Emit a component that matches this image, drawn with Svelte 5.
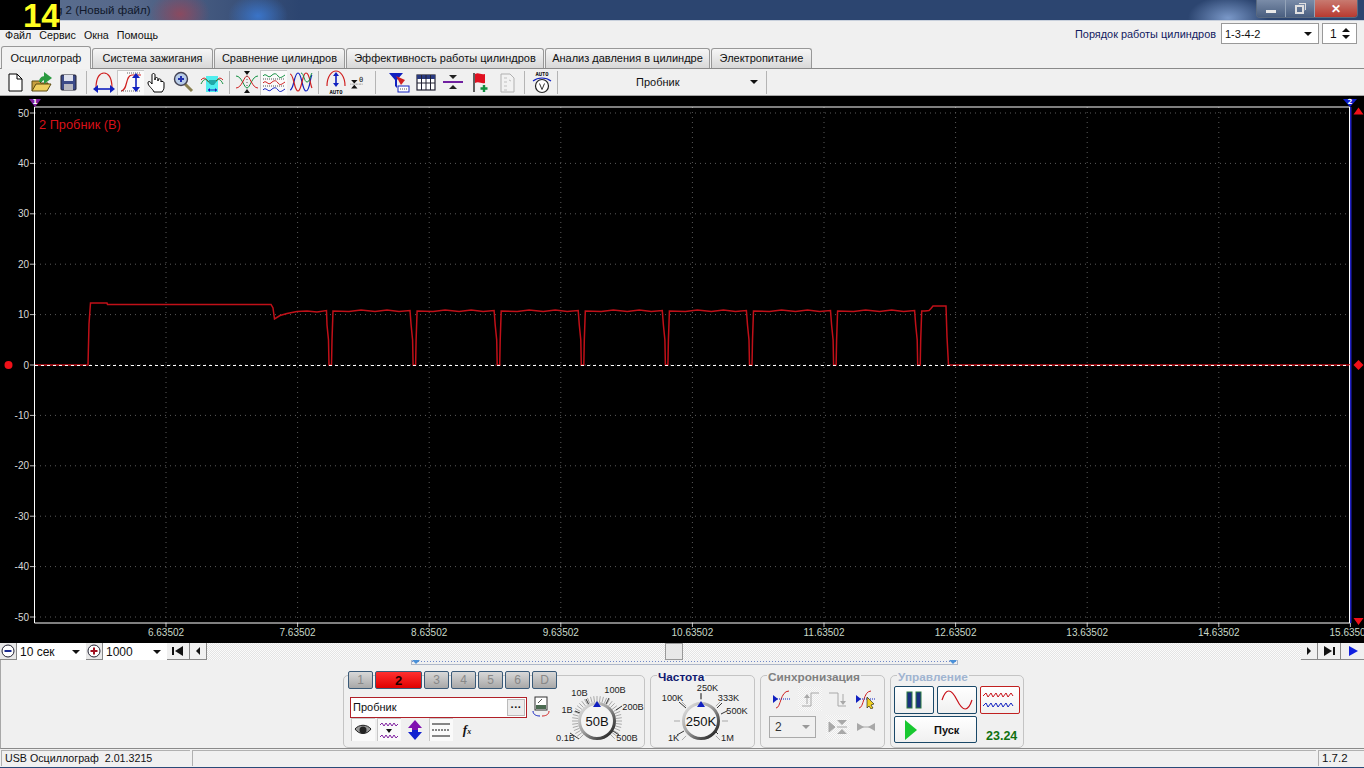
<script>
  const tabs = ['Осциллограф', 'Система зажигания', 'Сравнение цилиндров', 'Эффективность работы цилиндров', 'Анализ давления в цилиндре', 'Электропитание'];
  const menu = ['Файл', 'Сервис', 'Окна', 'Помощь'];
  const channels = ['3', '4', '5', '6', 'D'];

  const volts = [50, 40, 30, 20, 10, 0, -10, -20, -30, -40, -50];
  const times = [6, 7, 8, 9, 10, 11, 12, 13, 14, 15];
  const yOf = (v) => 365 - v * 5.04;
  const xOf = (t) => 166 + (t - 6) * 131.6;

  // trace, read off the picture: start, ramp and then the repeating dips
  function buildTrace() {
    let pts = [[35, 365], [88, 365], [89, 324], [90.5, 303], [107, 303], [107.5, 304.5], [271, 304.5], [273, 308], [274.5, 319], [280, 315.5], [287, 313.5], [297, 311.5], [307, 311], [317, 312], [326.5, 310.5]];
    for (let i = 0; i < 8; i++) {
      const d = 327 + i * 84.1;
      pts.push([d, 325], [d + 1.5, 340], [d + 2, 365], [d + 4.5, 365], [d + 5, 340], [d + 6, 311]);
      if (i < 7) {
        pts.push([d + 22, 311.5], [d + 34, 310], [d + 48, 311.5], [d + 60, 310], [d + 72, 311.5], [d + 83, 310.5]);
      }
    }
    pts.push([925, 311], [929, 310.5], [931, 308.5], [933, 306], [946, 306], [947, 337], [948.5, 365], [1350, 365]);
    return pts.map((p) => p.join(',')).join(' ');
  }
  const trace = buildTrace();

  function ticks(cx, cy, r1, r2, n) {
    let out = [];
    for (let i = 0; i <= n; i++) {
      const a = ((135 + (270 * i) / n) * Math.PI) / 180;
      out.push([cx + r1 * Math.cos(a), cy + r1 * Math.sin(a), cx + r2 * Math.cos(a), cy + r2 * Math.sin(a)]);
    }
    return out;
  }
  const voltTicks = ticks(41, 41, 19, 25, 36);
  const freqTicks = ticks(41, 41, 21, 27, 6);
</script>

{#snippet dial(value, labels, spokes, marks, gid)}
  <svg class="dial" width="90" height="68" viewBox="0 0 90 68">
    <defs>
      <linearGradient id={gid} x1="0" y1="0" x2="1" y2="1">
        <stop offset="0" stop-color="#e8e8e8" />
        <stop offset="0.45" stop-color="#a0a0a0" />
        <stop offset="1" stop-color="#101010" />
      </linearGradient>
    </defs>
    {#each marks as t}
      <line x1={t[0]} y1={t[1]} x2={t[2]} y2={t[3]} stroke="#a8a8a8" />
    {/each}
    {#each spokes as s}
      <line x1={s[0]} y1={s[1]} x2={s[2]} y2={s[3]} stroke="#333" />
    {/each}
    <circle cx="41" cy="41" r="17.5" fill="#f4f4f4" stroke="url(#{gid})" stroke-width="3" />
    <path d="M41 21l4 6h-8z" fill="#1020c0" />
    <text x="41" y="46" text-anchor="middle" class="dial-value">{value}</text>
    {#each labels as l}
      <text x={l[0]} y={l[1]} text-anchor="middle" class="dial-label">{l[2]}</text>
    {/each}
  </svg>
{/snippet}

<div class="app">
  <div class="titlebar">
    <div class="clock"><span>14</span></div>
    <span class="title">g 2 (Новый файл)</span>
    <div class="winbtns">
      <div class="winbtn"><span class="min"></span></div>
      <div class="winbtn"><span class="restore"></span></div>
      <div class="winbtn close">✕</div>
    </div>
  </div>

  <div class="menubar">
    <div class="menu">
      {#each menu as m}<span>{m}</span>{/each}
    </div>
    <div class="order">
      <span class="order-label">Порядок работы цилиндров</span>
      <div class="combo order-combo"><span>1-3-4-2</span><i class="arrow"></i></div>
      <div class="combo spin"><span>1</span><b class="spinarrows"><i class="up"></i><i class="arrow"></i></b></div>
    </div>
  </div>

  <div class="tabs">
    {#each tabs as t, i}
      <div class="tab" class:active={i === 0}>{t}</div>
    {/each}
  </div>

  <div class="toolbar">
    <div class="tb"><svg width="24" height="24" viewBox="0 0 24 24"><path d="M6 4h8l5 5v12H6z" fill="#fff" stroke="#000" /><path d="M14 4v5h5" fill="none" stroke="#000" /></svg></div>
    <div class="tb"><svg width="24" height="24" viewBox="0 0 24 24"><path d="M2 21V11h7l2 2h7v3" fill="#c8a040" stroke="#5a4a10" /><path d="M2 21l4-7h15l-4 7z" fill="#f0d060" stroke="#5a4a10" /><path d="M14 2l8 6-8 6z" fill="#2a9a40" /><path d="M9 12c0-3 2-6 6-6v4c-2 0-3 1-3 2z" fill="#2a9a40" /></svg></div>
    <div class="tb"><svg width="24" height="24" viewBox="0 0 24 24"><rect x="4" y="5" width="15" height="15" rx="1" fill="#3c4a88" stroke="#223" /><rect x="7" y="5" width="9" height="6" fill="#dfe2ee" /><rect x="7" y="14" width="9" height="6" fill="#b8b8c0" /></svg></div>
    <div class="sep"></div>
    <div class="tb"><svg width="24" height="24" viewBox="0 0 24 24"><path d="M4 18C4 7 8 3 12 3s8 4 8 15" fill="none" stroke="#d02020" stroke-width="1.2" /><path d="M4 19h16" stroke="#1020c0" stroke-width="1.6" /><path d="M1 19l5-4v8zM23 19l-5-4v8z" fill="#1020c0" /></svg></div>
    <div class="tb sel"><svg width="24" height="24" viewBox="0 0 24 24"><path d="M2 21c7 0 4-16 11-16h9" fill="none" stroke="#d02020" stroke-width="1.2" /><path d="M8 3h14M2 21h20" stroke="#666" stroke-dasharray="1 1" /><path d="M17 7v11" stroke="#1020c0" stroke-width="1.6" /><path d="M17 3l4 5h-8zM17 22l4-5h-8z" fill="#1020c0" /></svg></div>
    <div class="tb"><svg width="24" height="24" viewBox="0 0 24 24"><path d="M8 22c-1-3-6-6-6-9s3-1 4 1V5c0-2 3-2 3 0v5-1c0-2 3-2 3 0v2-1c0-2 3-1 3 0v2c0-1 3-1 3 1v4c0 3-1 3-2 5z" fill="#fff" stroke="#000" /></svg></div>
    <div class="tb zoomtb"><svg width="24" height="24" viewBox="0 0 24 24"><path d="M14 14l7 7" stroke="#8a8050" stroke-width="3" /><circle cx="10" cy="9" r="6.5" fill="#b8cce8" stroke="#445" stroke-width="1.4" /><path d="M7 9h6M10 6v6" stroke="#2030b0" stroke-width="2" /></svg></div>
    <div class="tb"><svg width="24" height="24" viewBox="0 0 24 24"><rect x="6" y="6" width="12" height="16" fill="#50eeee" /><path d="M1 10c5-6 7 4 11 4s6-10 11-4" fill="none" stroke="#d02020" /><path d="M1 14c5-10 7 0 11 0s6-10 11 0" fill="none" stroke="#109040" /><path d="M8 20h9" stroke="#1020c0" /><path d="M8 20l2-2v4zM17 20l-2-2v4z" fill="#1020c0" /><path d="M9 10h7v2l-2 3h-3l-2-3z" fill="#20a8a8" /></svg></div>
    <div class="sep"></div>
    <div class="tb"><svg width="24" height="24" viewBox="0 0 24 24"><path d="M1 6c6 0 8 12 11 12s5-12 11-12" fill="none" stroke="#109040" /><path d="M1 18c6 0 8-12 11-12s5 12 11 12" fill="none" stroke="#d02020" /><path d="M12 5l-3-4h6zM12 19l-3 4h6z" fill="#111" /><path d="M12 6v12" stroke="#555" stroke-dasharray="1 2" /></svg></div>
    <div class="tb sel"><svg width="24" height="24" viewBox="0 0 24 24"><path d="M1 6c3-4 5 3 8 0s5-3 7 0 4 1 7-1" fill="none" stroke="#109040" /><path d="M1 13c3-4 5 3 8 0s5-3 7 0 4 1 7-1" fill="none" stroke="#d02020" /><path d="M1 20c3-4 5 3 8 0s5-3 7 0 4 1 7-1" fill="none" stroke="#1020c0" /><path d="M1 9h22M1 16h22" stroke="#555" stroke-dasharray="1 1" /></svg></div>
    <div class="tb"><svg width="24" height="24" viewBox="0 0 24 24"><path d="M1 20C5 20 5 3 9 3s4 18 8 18 4-14 6-16" fill="none" stroke="#1020c0" stroke-width="1.2" /><path d="M1 4c4 0 4 17 8 17s4-18 8-18 4 12 6 15" fill="none" stroke="#d02020" stroke-width="1.2" /><path d="M12 3c3 0 3 9 6 9s3-6 5-9" fill="none" stroke="#109040" /></svg></div>
    <div class="sep"></div>
    <div class="tb"><svg width="24" height="24" viewBox="0 0 24 24"><path d="M3 16C3 6 8 1 12 1s9 5 9 15" fill="none" stroke="#d02020" stroke-width="1.2" /><path d="M12 5v10" stroke="#1020c0" stroke-width="1.6" /><path d="M12 2l3 4H9zM12 17l3-4H9z" fill="#1020c0" /><text x="12" y="23.5" text-anchor="middle" class="tiny">AUTO</text></svg></div>
    <div class="tb w17"><svg width="24" height="24" viewBox="0 0 24 24"><path d="M3 9h9l-4.500 5zM3 21h9l-4.500-5z" fill="#111" /><path d="M2 15h18" stroke="#444" stroke-dasharray="1 1" /><text x="17" y="12" text-anchor="middle" class="tiny zero">0</text></svg></div>
    <div class="sep wide"></div>
    <div class="tb"><svg width="24" height="24" viewBox="0 0 24 24"><path d="M2 3h14l-6 7v8l-2-2v-6z" fill="#1020c0" /><path d="M9 6l9 4-4 5z" fill="#d02020" /><rect x="11" y="16" width="11" height="6" fill="#fff" stroke="#1020c0" /><path d="M13 19h7" stroke="#555" stroke-dasharray="1 1" /></svg></div>
    <div class="tb"><svg width="24" height="24" viewBox="0 0 24 24"><rect x="3" y="5" width="18" height="15" fill="#fff" stroke="#223" stroke-width="1.2" /><rect x="3" y="5" width="18" height="4" fill="#2a3a80" /><path d="M7.500 5v15M12 5v15M16.500 5v15M3 13h18" stroke="#223" /></svg></div>
    <div class="tb"><svg width="24" height="24" viewBox="0 0 24 24"><path d="M2 12h20" stroke="#7020a0" stroke-width="2" /><path d="M12 9l-4-4h8zM12 15l-4 4h8z" fill="#222" /></svg></div>
    <div class="tb"><svg width="24" height="24" viewBox="0 0 24 24"><path d="M6 3v19" stroke="#222" stroke-width="1.4" /><path d="M7 4c4-2 5 1 10 0v9c-4 1-6-2-10 0z" fill="#e01020" /><path d="M16 15v7M12.500 18.500h7" stroke="#109040" stroke-width="2.4" /></svg></div>
    <div class="tb"><svg width="24" height="24" viewBox="0 0 24 24"><path d="M6 4h9l4 4v14H6z" fill="#f2f2f2" stroke="#b0b0b0" /><path d="M9 8h3M9 12h3M9 16h3M9 20h3M14 10l2 1" stroke="#c0c0c0" /></svg></div>
    <div class="sep"></div>
    <div class="tb"><svg width="24" height="24" viewBox="0 0 24 24"><text x="12" y="6" text-anchor="middle" class="tiny">AUTO</text><path d="M3 11c5-4 13-4 18 0" fill="none" stroke="#1020c0" stroke-width="1.2" /><circle cx="12" cy="16" r="6.500" fill="#fff" stroke="#222" stroke-width="1.200" /><path d="M9.500 13.500l2.500 6 2.500-6" fill="none" stroke="#333" /></svg></div>
    <div class="sep small"></div>
    <div class="probe"><span>Пробник</span><i class="arrow"></i></div>
    <div class="sep small"></div>
  </div>

  <div class="scope">
    <svg width="1364" height="547" viewBox="0 96 1364 547">
      {#each volts as v}
        <line x1="35" x2="1350" y1={yOf(v)} y2={yOf(v)} class="grid" />
        <line x1="30" x2="35" y1={yOf(v)} y2={yOf(v)} stroke="#bbb" />
        <text x="29" y={yOf(v) + 3.500} text-anchor="end" class="vlabel">{v}</text>
      {/each}
      {#each times as t}
        <line y1="107" y2="623" x1={xOf(t)} x2={xOf(t)} class="grid" />
        <line y1="623" y2="627" x1={xOf(t)} x2={xOf(t)} stroke="#bbb" />
        <text x={xOf(t)} y="636" text-anchor="middle" class="tlabel">{t}.63502</text>
      {/each}
      <path d="M34.500 107H1350M34.500 623H1350M34.500 107V623" fill="none" stroke="#fff" />
      <path d="M1350.500 107V623" stroke="#2020c0" stroke-width="2" />
      <path d="M1349.500 107V623" stroke="#fff" />
      <polyline points={trace} fill="none" stroke="#c01018" stroke-width="1.500" />
      <line x1="35" x2="1350" y1="365.500" y2="365.500" stroke="#fff" stroke-dasharray="3 3" />
      <text x="39" y="129" class="chname">2 Пробник (В)</text>
      <path d="M29 99h12l-6 8z" fill="#8020a0" />
      <text x="35" y="104" text-anchor="middle" class="mark">1</text>
      <path d="M1343 99h14l-7 8z" fill="#1020d0" />
      <text x="1350" y="104" text-anchor="middle" class="mark">2</text>
      <circle cx="8.500" cy="365" r="4" fill="#f01018" />
      <path d="M1358.500 360l5 5-5 5-5-5z" fill="#f01018" />
      <path d="M1358.500 107.500l5 7h-10zM1358.500 625l5-7h-10z" fill="#f01018" />
    </svg>
  </div>

  <div class="scrollrow">
    <div class="sbtn round"><svg width="14" height="14" viewBox="0 0 14 14"><circle cx="7" cy="7" r="6" fill="#fff" stroke="#223" /><path d="M3.500 7h7" stroke="#1a2a90" stroke-width="2" /></svg></div>
    <div class="scombo first"><span>10 сек</span><i class="arrow"></i></div>
    <div class="sbtn round"><svg width="14" height="14" viewBox="0 0 14 14"><circle cx="7" cy="7" r="6" fill="#fff" stroke="#223" /><path d="M3.500 7h7M7 3.500v7" stroke="#a01020" stroke-width="2" /></svg></div>
    <div class="scombo second"><span>1000</span><i class="arrow"></i></div>
    <div class="sbtn wide"><svg width="12" height="10" viewBox="0 0 12 10"><path d="M1 1v8" stroke="#111" stroke-width="2" /><path d="M11 0v10L3 5z" fill="#111" /></svg></div>
    <div class="sbtn"><svg width="8" height="10" viewBox="0 0 8 10"><path d="M6 1v8L2 5z" fill="#111" /></svg></div>
    <div class="track"><div class="thumb"></div></div>
    <div class="sbtn"><svg width="8" height="10" viewBox="0 0 8 10"><path d="M2 1v8l4-4z" fill="#111" /></svg></div>
    <div class="sbtn wide"><svg width="12" height="10" viewBox="0 0 12 10"><path d="M11 1v8" stroke="#111" stroke-width="2" /><path d="M1 0v10l8-5z" fill="#111" /></svg></div>
    <div class="sbtn wide last"><svg width="12" height="10" viewBox="0 0 12 10"><path d="M2 0v10l9-5z" fill="#1020e0" /></svg></div>
  </div>

  <div class="panel">
    <div class="range"><i class="down"></i><i class="down"></i></div>
    <div class="groups">
      <div class="group channel">
        <div class="chan-left">
          <div class="chan-tabs">
            <div class="ct off">1</div>
            <div class="ct on">2</div>
            {#each channels as c}<div class="ct off">{c}</div>{/each}
          </div>
          <div class="probe-row">
            <div class="probe-input"><span>Пробник</span><b>···</b></div>
            <svg width="20" height="22" viewBox="0 0 20 22"><rect x="4" y="1" width="12" height="13" fill="#fff" stroke="#333" /><rect x="5" y="9" width="10" height="4" fill="#4a6a50" /><path d="M7 7l4-4" stroke="#555" /><path d="M2 15c0 4 4 5 7 5" fill="none" stroke="#1020c0" /><path d="M18 15c0 4-4 5-7 5" fill="none" stroke="#d02020" /></svg>
          </div>
          <div class="chan-icons">
            <div class="ci sel"><svg width="20" height="16" viewBox="0 0 20 16"><path d="M2 7c4-5 12-5 16 0-4 6-12 6-16 0z" fill="#999" stroke="#222" /><circle cx="10" cy="8" r="3.500" fill="#222" /></svg></div>
            <div class="ci sel"><svg width="20" height="20" viewBox="0 0 20 20"><path d="M1 5l2-2 2 3 2-3 2 3 2-3 2 3 2-3 2 3 2-2" fill="none" stroke="#8020a0" /><path d="M1 17l2-2 2 3 2-3 2 3 2-3 2 3 2-3 2 3 2-2" fill="none" stroke="#8020a0" /><path d="M7 9h6l-3 4z" fill="#111" /></svg></div>
            <div class="ci"><svg width="18" height="22" viewBox="0 0 18 22"><path d="M9 1l7 8h-4v2H6V9H2z" fill="#8010b0" /><path d="M9 21l7-8h-4v-2H6v2H2z" fill="#1020d0" /></svg></div>
            <div class="ci sel"><svg width="20" height="18" viewBox="0 0 20 18"><path d="M1 3h18M1 15h18" stroke="#111" /><path d="M1 9h18" stroke="#111" stroke-dasharray="2 1" /></svg></div>
            <div class="ci fx"><em>f</em><small>x</small></div>
          </div>
        </div>
        {@render dial('50В', [[9.500, 61, '0.1В'], [11, 33, '1В'], [23.500, 16, '10В'], [59, 13, '100В'], [77, 30, '200В'], [71, 61, '500В']], [[14, 53, 23, 59], [19, 31, 24, 33], [30, 19, 33, 25], [53, 18, 50, 24], [66, 26, 60, 30], [63, 55, 57, 51]], voltTicks, 'ringV')}
      </div>

      <div class="group freq">
        <span class="legend navy">Частота</span>
        {@render dial('250K', [[13.500, 61, '1K'], [12.500, 21, '100K'], [47.500, 11, '250K'], [68.500, 21, '333K'], [77, 34, '500K'], [67.500, 61, '1M']], [[17, 55, 24, 51], [19, 22, 26, 28], [41, 13, 41, 19], [62, 23, 57, 28], [67, 31, 61, 34], [58, 54, 53, 49]], freqTicks, 'ringF')}
      </div>

      <div class="group sync">
        <span class="legend gray">Синхронизация</span>
        <div class="sync-grid">
          <div class="si"><svg width="20" height="20" viewBox="0 0 20 20"><path d="M4 19C9 19 8 2 17 2" fill="none" stroke="#d02020" /><path d="M1 10h18" stroke="#1020c0" stroke-dasharray="1 1" /><path d="M1 6l5 4-5 4z" fill="#1020c0" /></svg></div>
          <div class="si hatch"><svg width="20" height="20" viewBox="0 0 20 20"><path d="M2 17h9V4h8M7 15V6" fill="none" stroke="#a8a8a8" /><path d="M7 5l3 4H4z" fill="#a8a8a8" /></svg></div>
          <div class="si"><svg width="20" height="20" viewBox="0 0 20 20"><path d="M1 4h9v13h8M15 5v9" fill="none" stroke="#a8a8a8" /><path d="M15 16l3-4h-6z" fill="#a8a8a8" /></svg></div>
          <div class="si"><svg width="22" height="20" viewBox="0 0 22 20"><path d="M4 19C9 19 8 2 16 2" fill="none" stroke="#d02020" /><path d="M1 10h20" stroke="#1020c0" stroke-dasharray="1 1" /><path d="M1 6l5 4-5 4z" fill="#1020c0" /><path d="M12 8l7 7-3 1 2 3-2 1-2-3-2 2z" fill="#f0d020" stroke="#111" stroke-width="0.600" /></svg></div>
          <div class="sync-combo"><span>2</span><i class="arrow gray-arrow"></i></div>
          <div class="si hatch"><svg width="20" height="20" viewBox="0 0 20 20"><path d="M1 5l6 5-6 5zM9 10h10" fill="#a8a8a8" stroke="#a8a8a8" /><path d="M14 8l5-5H9zM14 12l5 5H9z" fill="#a8a8a8" /></svg></div>
          <div class="si"><svg width="20" height="14" viewBox="0 0 20 14"><path d="M1 3l7 4-7 4zM19 3l-7 4 7 4z" fill="#a8a8a8" /><path d="M1 7h18" stroke="#a8a8a8" /></svg></div>
        </div>
      </div>

      <div class="group ctl">
        <span class="legend pale">Управление</span>
        <div class="ctl-grid">
          <div class="cb"><svg width="18" height="18" viewBox="0 0 18 18"><rect x="2" y="1" width="5" height="16" fill="#1a3080" stroke="#2a7a40" /><rect x="11" y="1" width="5" height="16" fill="#1a3080" stroke="#2a7a40" /></svg></div>
          <div class="cb"><svg width="32" height="20" viewBox="0 0 32 20"><path d="M1 10C5 -2 10 -2 16 10s11 12 15 0" fill="none" stroke="#c81018" stroke-width="1.200" /></svg></div>
          <div class="cb red"><svg width="36" height="22" viewBox="0 0 36 22"><path d="M1 7l3-3 2 4 3-4 2 4 3-4 2 4 3-4 2 4 3-4 2 4 3-4 2 3" fill="none" stroke="#c81018" /><path d="M1 17l3-3 2 4 3-4 2 4 3-4 2 4 3-4 2 4 3-4 2 4 3-4 2 3" fill="none" stroke="#1020c0" /></svg></div>
          <div class="cb start"><svg width="14" height="22" viewBox="0 0 14 22"><path d="M1 1l12 10L1 21z" fill="#18c830" /></svg><b>Пуск</b></div>
          <div class="readout">23.24</div>
        </div>
      </div>
    </div>
  </div>

  <div class="status">
    <div class="cell first-cell">USB Осциллограф&nbsp; 2.01.3215</div>
    <div class="cell grow"></div>
    <div class="cell ver">1.7.2</div>
  </div>
</div>

<style>
  :global(body) {
    margin: 0;
    overflow: hidden;
    background: #f0f0f0;
  }

  .app {
    width: 1364px;
    height: 768px;
    display: flex;
    flex-direction: column;
    overflow: hidden;
    font-family: "Liberation Sans", Arial, sans-serif;
    font-size: 11px;
    color: #111;
    background: #f0f0f0;
  }

  .arrow {
    display: block;
    width: 0;
    height: 0;
    border-left: 4px solid transparent;
    border-right: 4px solid transparent;
    border-top: 4px solid #111;
  }

  /* title bar */
  .titlebar {
    position: relative;
    height: 21px;
    flex: none;
    box-sizing: border-box;
    border-bottom: 1px solid #c8d0dc;
    background:
      radial-gradient(ellipse 30px 24px at 180px 14px, #8a4a60, transparent),
      radial-gradient(ellipse 30px 22px at 258px 16px, #3a74c8, transparent),
      radial-gradient(ellipse 40px 22px at 1228px 18px, #7a98c8, transparent),
      linear-gradient(90deg, #5a6f90 0, #56688a 130px, #2c4570 300px, #2c4570 100%);
  }
  .clock {
    position: absolute;
    left: 0;
    top: 0;
    width: 60px;
    height: 30px;
    background: #000;
    color: #ffff20;
    overflow: hidden;
    z-index: 2;
  }
  .clock span {
    display: block;
    font: bold 33px/32px "Liberation Sans", sans-serif;
    padding-left: 23px;
    white-space: nowrap;
  }
  .title {
    position: absolute;
    left: 56px;
    top: 4px;
    font-size: 11.500px;
    color: #10182a;
  }
  .winbtns {
    position: absolute;
    right: 6px;
    top: 0;
    display: flex;
    height: 17px;
    border: 1px solid #5a6a80;
    border-top: 0;
    border-radius: 0 0 4px 4px;
    overflow: hidden;
  }
  .winbtn {
    width: 28px;
    display: flex;
    align-items: center;
    justify-content: center;
    background: linear-gradient(#7a8ca8, #4a5f80);
    border-right: 1px solid #93a3b8;
  }
  .winbtn.close {
    width: 42px;
    border: 0;
    color: #fff;
    font-weight: bold;
    font-size: 12px;
    background: linear-gradient(#c87a70, #b83a30);
  }
  .min {
    width: 10px;
    height: 3px;
    margin-top: 5px;
    background: #e8e8e8;
  }
  .restore {
    width: 5px;
    height: 5px;
    margin: 2px 0 0 -2px;
    border: 2px solid #e0e0e0;
    box-shadow: 2px -2px 0 -1px #7a8ca8, 3px -3px 0 -1px #e0e0e0;
  }

  /* menu + cylinder order */
  .menubar {
    height: 25px;
    flex: none;
    display: flex;
    justify-content: space-between;
    align-items: flex-start;
    padding: 2px 7px 0 5px;
    box-sizing: border-box;
  }
  .menu {
    display: flex;
    gap: 8px;
    padding-top: 6px;
    font-size: 10.700px;
  }
  .order {
    display: flex;
    align-items: center;
    height: 21px;
  }
  .order-label {
    color: #101a60;
    margin-right: 5px;
    font-size: 10.900px;
  }
  .combo {
    height: 21px;
    box-sizing: border-box;
    display: flex;
    align-items: center;
    justify-content: space-between;
    background: #fff;
    border: 1px solid #999;
    padding: 0 6px 0 3px;
  }
  .order-combo {
    width: 98px;
    margin-right: 3px;
  }
  .spin {
    width: 35px;
    padding-left: 7px;
    font-size: 12px;
  }
  .spinarrows {
    display: flex;
    flex-direction: column;
    gap: 3px;
  }
  .up {
    display: block;
    width: 0;
    height: 0;
    border-left: 4px solid transparent;
    border-right: 4px solid transparent;
    border-bottom: 4px solid #111;
  }

  /* tabs */
  .tabs {
    height: 23px;
    flex: none;
    display: grid;
    grid-template-columns: 90px 121px 131px 198px 165px 101px;
    justify-content: start;
    align-items: end;
    padding-left: 1px;
    gap: 1px;
    box-sizing: border-box;
    border-bottom: 1px solid #8a8a8a;
  }
  .tab {
    height: 20px;
    box-sizing: border-box;
    padding-top: 3px;
    text-align: center;
    background: linear-gradient(#f6f6f6, #d8d8d8);
    border: 1px solid #989898;
    border-bottom: 0;
    border-radius: 3px 3px 0 0;
    white-space: nowrap;
  }
  .tab.active {
    height: 23px;
    margin-bottom: -1px;
    padding-top: 5px;
    background: #f2f2f2;
  }

  /* toolbar */
  .toolbar {
    height: 27px;
    flex: none;
    display: flex;
    align-items: center;
    padding-left: 1px;
    box-sizing: border-box;
    border-bottom: 1px solid #a8a8a8;
  }
  .tb {
    width: 27px;
    height: 25px;
    flex: none;
    display: flex;
    align-items: center;
    justify-content: center;
    box-sizing: border-box;
  }
  .tb.sel {
    background: #fafafa;
    box-shadow: inset 1px 1px 0 #c8c8c8;
  }
  .tb.w17 {
    width: 17px;
  }
  .tb.zoomtb {
    justify-content: flex-start;
  }
  .sep {
    width: 8px;
    flex: none;
    height: 23px;
  }
  .sep::after {
    content: "";
    display: block;
    width: 1px;
    height: 23px;
    margin: 0 auto;
    background: #b4b4b4;
  }
  .sep.wide {
    width: 19px;
  }
  .sep.small {
    width: 5px;
  }
  .probe {
    width: 204px;
    flex: none;
    display: flex;
    align-items: center;
    justify-content: space-between;
    padding: 0 6px 0 76px;
    box-sizing: border-box;
  }
  .tiny {
    font: bold 5.500px "DejaVu Sans Mono", monospace;
    fill: #111;
  }
  .tiny.zero {
    font-size: 10px;
    font-weight: normal;
  }

  /* scope */
  .scope {
    height: 547px;
    flex: none;
    background: #000;
    overflow: hidden;
  }
  .scope svg {
    display: block;
  }
  .grid {
    stroke: #5a5a5a;
    stroke-dasharray: 1 4;
  }
  .vlabel {
    font-size: 10px;
    fill: #d8d8d8;
  }
  .tlabel {
    font-size: 10px;
    fill: #c8d8c8;
  }
  .chname {
    font-size: 12.800px;
    fill: #d81018;
  }
  .mark {
    font: bold 7px "DejaVu Sans", sans-serif;
    fill: #fff;
  }

  /* scroll row */
  .scrollrow {
    height: 17px;
    flex: none;
    display: flex;
    background: #fff;
  }
  .sbtn {
    width: 17px;
    flex: none;
    box-sizing: border-box;
    display: flex;
    align-items: center;
    justify-content: center;
    background: #f0f0f0;
    border-right: 1px solid #888;
    border-bottom: 1px solid #888;
  }
  .sbtn.round {
    background: #e8e8e8;
  }
  .sbtn.wide {
    width: 23px;
  }
  .sbtn.last {
    border-right: 0;
  }
  .scombo {
    display: flex;
    align-items: center;
    justify-content: space-between;
    box-sizing: border-box;
    flex: none;
    font-size: 12px;
    padding: 0 6px 0 3px;
    background: #fff;
  }
  .scombo.first {
    width: 69px;
  }
  .scombo.second {
    width: 64px;
  }
  .track {
    flex: 1;
    position: relative;
    background: repeating-conic-gradient(#e4e4e4 0 25%, #fbfbfb 0 50%) 0 0 / 2px 2px;
  }
  .thumb {
    position: absolute;
    left: 458px;
    top: 0;
    width: 18px;
    height: 17px;
    box-sizing: border-box;
    background: #e8e8e8;
    border: 1px solid #999;
  }

  /* bottom panel */
  .panel {
    height: 89px;
    flex: none;
    box-sizing: border-box;
    border-left: 1px solid #a8a8a8;
    border-bottom: 1px solid #8a8a8a;
    position: relative;
  }
  .range {
    position: absolute;
    left: 410px;
    top: 0;
    width: 545px;
    height: 4px;
    display: flex;
    justify-content: space-between;
    border: 1px solid #b0b8c8;
    border-top: 0;
    background: repeating-linear-gradient(90deg, #7088c8 0 1px, transparent 1px 3px) 0 1px / 100% 1px no-repeat;
  }
  .down {
    display: block;
    width: 0;
    height: 0;
    border-left: 4px solid transparent;
    border-right: 4px solid transparent;
    border-top: 4px solid #4a90d8;
  }
  .groups {
    display: flex;
    gap: 5px;
    padding: 15px 0 0 342px;
    align-items: flex-start;
  }
  .group {
    position: relative;
    height: 73px;
    box-sizing: border-box;
    border: 1px solid #c4c4c4;
    border-radius: 5px;
  }
  .legend {
    position: absolute;
    top: -6px;
    left: 6px;
    padding: 0 1px;
    background: #f0f0f0;
    font-weight: bold;
    font-size: 11.800px;
    line-height: 14px;
  }
  .navy {
    color: #101a70;
  }
  .gray {
    color: #808080;
  }
  .pale {
    color: #a0b4d0;
  }
  .dial {
    display: block;
    flex: none;
  }
  .dial-value {
    font-size: 13px;
    fill: #111;
  }
  .dial-label {
    font-size: 9.200px;
    fill: #222;
  }

  .channel {
    width: 302px;
    display: flex;
  }
  .channel .dial {
    margin-top: 4px;
  }
  .chan-left {
    width: 212px;
    flex: none;
    margin-top: -5px;
    padding-left: 4px;
    box-sizing: border-box;
  }
  .chan-tabs {
    display: flex;
    gap: 2px;
  }
  .ct {
    width: 25px;
    flex: none;
    height: 18px;
    box-sizing: border-box;
    display: flex;
    align-items: center;
    justify-content: center;
    font-size: 12px;
    border: 1px solid #3a5a78;
    border-radius: 2px;
    color: #888;
    background: linear-gradient(#d8d8d8, #a8a8a8);
  }
  .ct.on {
    width: 47px;
    color: #200;
    font-weight: bold;
    font-size: 13px;
    background: linear-gradient(#ff3030, #e00000);
  }
  .probe-row {
    display: flex;
    align-items: center;
    gap: 4px;
    margin: 7px 0 0 2px;
  }
  .probe-input {
    width: 177px;
    flex: none;
    height: 21px;
    box-sizing: border-box;
    border: 1px solid #b02028;
    background: #fff;
    display: flex;
    justify-content: space-between;
    align-items: center;
    padding: 0 1px 0 2px;
  }
  .probe-input b {
    width: 18px;
    height: 17px;
    background: #ececec;
    border: 1px solid #bbb;
    box-sizing: border-box;
    text-align: center;
    line-height: 14px;
  }
  .chan-icons {
    display: flex;
    margin: 0 0 0 3px;
    gap: 2px;
    height: 23px;
  }
  .ci {
    width: 24px;
    display: flex;
    align-items: center;
    justify-content: center;
  }
  .ci.sel {
    background: #fafafa;
    box-shadow: inset 1px 1px 0 #c8c8c8;
  }
  .fx em {
    font: italic bold 13px "Liberation Serif", serif;
  }
  .fx small {
    font: italic bold 8px "Liberation Serif", serif;
    margin-top: 3px;
  }

  .freq {
    width: 105px;
    padding: 4px 0 0 9px;
  }

  .sync {
    width: 125px;
  }
  .sync-grid {
    display: grid;
    grid-template-columns: repeat(4, 28px);
    grid-auto-rows: 28px;
    padding: 9px 0 0 7px;
    align-items: center;
    justify-items: center;
  }
  .si {
    width: 24px;
    height: 24px;
    display: flex;
    align-items: center;
    justify-content: center;
  }
  .hatch {
    background: repeating-conic-gradient(#e8e8e8 0 25%, #fafafa 0 50%) 0 0 / 2px 2px;
  }
  .sync-combo {
    grid-column: span 2;
    width: 47px;
    height: 22px;
    box-sizing: border-box;
    border: 1px solid #aaa;
    display: flex;
    align-items: center;
    justify-content: space-between;
    padding: 0 5px 0 5px;
    font-size: 12px;
    color: #333;
    justify-self: start;
    margin-left: 1px;
  }
  .gray-arrow {
    border-top-color: #999;
  }

  .ctl {
    width: 134px;
  }
  .ctl-grid {
    display: grid;
    grid-template-columns: 40px 40px 40px;
    grid-template-rows: 28px 27px;
    gap: 2px 3px;
    padding: 10px 0 0 3px;
  }
  .cb {
    box-sizing: border-box;
    display: flex;
    align-items: center;
    justify-content: center;
    border: 1px solid #1a4868;
    border-radius: 2px;
    background: linear-gradient(#ffffff, #f0f0f0);
  }
  .cb.red {
    border-color: #c02020;
  }
  .cb.start {
    grid-column: span 2;
    justify-content: flex-start;
    padding-left: 9px;
  }
  .cb.start b {
    margin-left: 16px;
    font-size: 11px;
  }
  .readout {
    color: #107010;
    font-weight: bold;
    font-size: 12.500px;
    align-self: end;
    padding: 0 0 0 6px;
  }

  /* status bar */
  .status {
    height: 19px;
    flex: none;
    display: flex;
    gap: 2px;
    padding: 1px 0 1px 1px;
    box-sizing: border-box;
    border-bottom: 1px solid #2a4a78;
  }
  .cell {
    border-top: 1px solid #b0b0b0;
    border-left: 1px solid #b0b0b0;
    box-sizing: border-box;
    padding: 1px 3px;
    white-space: nowrap;
    font-size: 10.700px;
  }
  .first-cell {
    width: 189px;
  }
  .grow {
    flex: 1;
  }
  .ver {
    width: 46px;
    font-size: 11.500px;
  }
</style>
